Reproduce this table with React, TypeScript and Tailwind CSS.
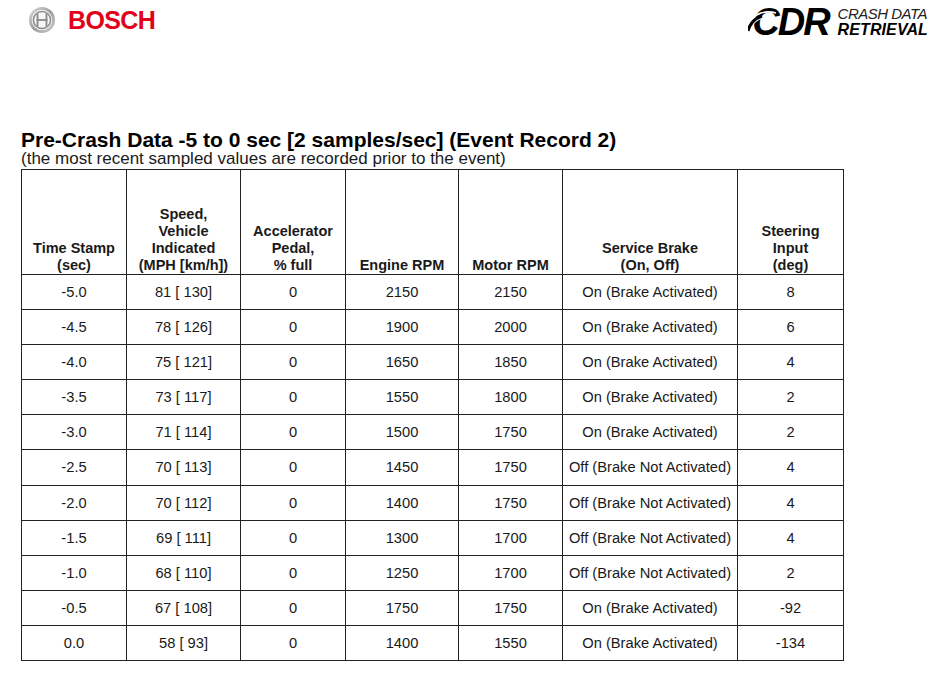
import React from "react";

const rows: [string, string, string, string, string, string, string][] = [
  ["-5.0", "81 [ 130]", "0", "2150", "2150", "On (Brake Activated)", "8"],
  ["-4.5", "78 [ 126]", "0", "1900", "2000", "On (Brake Activated)", "6"],
  ["-4.0", "75 [ 121]", "0", "1650", "1850", "On (Brake Activated)", "4"],
  ["-3.5", "73 [ 117]", "0", "1550", "1800", "On (Brake Activated)", "2"],
  ["-3.0", "71 [ 114]", "0", "1500", "1750", "On (Brake Activated)", "2"],
  ["-2.5", "70 [ 113]", "0", "1450", "1750", "Off (Brake Not Activated)", "4"],
  ["-2.0", "70 [ 112]", "0", "1400", "1750", "Off (Brake Not Activated)", "4"],
  ["-1.5", "69 [ 111]", "0", "1300", "1700", "Off (Brake Not Activated)", "4"],
  ["-1.0", "68 [ 110]", "0", "1250", "1700", "Off (Brake Not Activated)", "2"],
  ["-0.5", "67 [ 108]", "0", "1750", "1750", "On (Brake Activated)", "-92"],
  ["0.0", "58 [ 93]", "0", "1400", "1550", "On (Brake Activated)", "-134"],
];

function BoschEmblem() {
  return (
    <svg width="28" height="28" viewBox="0 0 30 30">
      <defs>
        <linearGradient id="ring" x1="0" y1="0" x2="1" y2="1">
          <stop offset="0" stopColor="#e4e4e4" />
          <stop offset="0.5" stopColor="#9a9a9a" />
          <stop offset="1" stopColor="#d0d0d0" />
        </linearGradient>
      </defs>
      <circle cx="15" cy="15" r="14" fill="url(#ring)" />
      <circle cx="15" cy="15" r="11" fill="#f6f6f6" />
      <circle cx="15" cy="15" r="9.2" fill="none" stroke="#8c8c8c" strokeWidth="1.6" />
      <rect x="9.2" y="8" width="2" height="14" fill="#8c8c8c" />
      <rect x="18.8" y="8" width="2" height="14" fill="#8c8c8c" />
      <rect x="9.2" y="14" width="11.6" height="2" fill="#8c8c8c" />
    </svg>
  );
}

function CdrLogo() {
  return (
    <div className="flex items-center gap-[9px]">
      <div className="relative">
        <span className="block text-[38px] leading-[38px] font-bold italic tracking-[-2px] text-black [font-family:'Liberation_Sans',Arial,sans-serif]">
          CDR
        </span>
        <svg className="absolute -left-[4px] top-[6px]" width="30" height="26" viewBox="0 0 30 26">
          <path d="M2 14 C 6 4, 18 1, 28 4" fill="none" stroke="white" strokeWidth="1.6" />
          <path d="M3 19 C 7 9, 18 6, 27 8" fill="none" stroke="white" strokeWidth="1.4" />
          <path d="M0 22 C 2 14, 8 9, 14 7" fill="none" stroke="black" strokeWidth="3" />
        </svg>
      </div>
      <div className="flex flex-col [font-family:'Liberation_Sans',Arial,sans-serif] italic text-black">
        <span className="text-[15px] leading-[15px] font-light tracking-[-0.5px] text-[#222]">CRASH DATA</span>
        <span className="text-[16px] leading-[17px] font-bold tracking-[0.1px]">RETRIEVAL</span>
      </div>
    </div>
  );
}

export default function App() {
  return (
    <div className="w-[936px] h-[676px] bg-white overflow-hidden [font-family:'Liberation_Sans',Arial,sans-serif] text-[#1a1a1a]">
      <div className="flex items-start justify-between h-[40px]">
        <div className="flex items-center gap-[12px] pl-[28px] pt-[6px]">
          <BoschEmblem />
          <span className="text-[25px] leading-[28px] font-bold text-[#e2001a] tracking-[-0.6px]">BOSCH</span>
        </div>
        <div className="pt-[3px] pr-[8px]">
          <CdrLogo />
        </div>
      </div>

      <div className="pl-[21px] pt-[89px]">
        <div className="text-[21px] leading-[22px] h-[22px] font-bold text-black">
          Pre-Crash Data -5 to 0 sec [2 samples/sec] (Event Record 2)
        </div>
        <div className="text-[17px] leading-[15px] h-[18px] text-[#1a1a1a]">
          (the most recent sampled values are recorded prior to the event)
        </div>
        <table className="border-collapse text-center">
          <colgroup>
            <col className="w-[105px]" />
            <col className="w-[114px]" />
            <col className="w-[105px]" />
            <col className="w-[113px]" />
            <col className="w-[104px]" />
            <col className="w-[175px]" />
            <col className="w-[106px]" />
          </colgroup>
          <thead>
            <tr className="h-[105px] align-bottom text-[14.5px] leading-[17px] font-bold text-[#1a1a1a]">
              <th className="border border-[#222] pb-0 font-bold">Time Stamp<br />(sec)</th>
              <th className="border border-[#222] pb-0 font-bold">Speed,<br />Vehicle<br />Indicated<br />(MPH [km/h])</th>
              <th className="border border-[#222] pb-0 font-bold">Accelerator<br />Pedal,<br />% full</th>
              <th className="border border-[#222] pb-0 font-bold">Engine RPM</th>
              <th className="border border-[#222] pb-0 font-bold">Motor RPM</th>
              <th className="border border-[#222] pb-0 font-bold">Service Brake<br />(On, Off)</th>
              <th className="border border-[#222] pb-0 font-bold">Steering<br />Input<br />(deg)</th>
            </tr>
          </thead>
          <tbody>
            {rows.map((r, ri) => (
              <tr key={r[0]} className={`text-[14.7px] leading-[16px] ${ri % 2 === 0 ? "h-[35px]" : "h-[35.2px]"}`}>
                {r.map((c, i) => (
                  <td key={i} className="border border-[#222] px-[2px] whitespace-nowrap">
                    {c}
                  </td>
                ))}
              </tr>
            ))}
          </tbody>
        </table>
      </div>
    </div>
  );
}
